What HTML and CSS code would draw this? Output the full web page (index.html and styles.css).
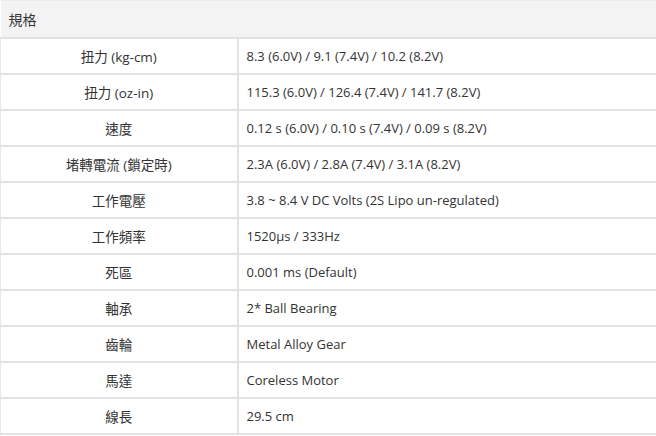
FILE: index.html
```html
<!DOCTYPE html>
<html lang="zh-Hant">
<head>
<meta charset="utf-8">
<link rel="stylesheet" href="styles.css">
</head>
<body>
<table class="spec">
  <colgroup>
    <col class="col-label">
    <col class="col-value">
  </colgroup>
  <thead>
    <tr><th colspan="2" class="spec-title">規格</th></tr>
  </thead>
  <tbody>
    <tr><td class="label">扭力 (kg-cm)</td><td class="value">8.3 (6.0V) / 9.1 (7.4V) / 10.2 (8.2V)</td></tr>
    <tr><td class="label">扭力 (oz-in)</td><td class="value">115.3 (6.0V) / 126.4 (7.4V) / 141.7 (8.2V)</td></tr>
    <tr><td class="label">速度</td><td class="value">0.12 s (6.0V) / 0.10 s (7.4V) / 0.09 s (8.2V)</td></tr>
    <tr><td class="label">堵轉電流 (鎖定時)</td><td class="value">2.3A (6.0V) / 2.8A (7.4V) / 3.1A (8.2V)</td></tr>
    <tr><td class="label">工作電壓</td><td class="value">3.8 ~ 8.4 V DC Volts (2S Lipo un-regulated)</td></tr>
    <tr><td class="label">工作頻率</td><td class="value">1520μs / 333Hz</td></tr>
    <tr><td class="label">死區</td><td class="value">0.001 ms (Default)</td></tr>
    <tr><td class="label">軸承</td><td class="value">2* Ball Bearing</td></tr>
    <tr><td class="label">齒輪</td><td class="value">Metal Alloy Gear</td></tr>
    <tr><td class="label">馬達</td><td class="value">Coreless Motor</td></tr>
    <tr><td class="label">線長</td><td class="value">29.5 cm</td></tr>
  </tbody>
</table>
</body>
</html>
```

FILE: styles.css
```css
html, body {
  margin: 0;
  padding: 0;
  background: #ffffff;
}

body {
  font-family: "Open Sans", "Noto Sans CJK TC", sans-serif;
  font-size: 13px;
  color: #333333;
}

.spec {
  width: 660px;
  border-collapse: collapse;
  table-layout: fixed;
}

.col-label {
  width: 237px;
}

.spec-title {
  text-align: left;
  font-weight: normal;
  font-size: 14px;
  background: #f3f3f3;
  height: 37px;
  padding: 0 8px;
  border-top: 1px solid #ebebeb;
  border-bottom: 2px solid #e2e2e2;
  box-sizing: border-box;
}

.spec td {
  height: 33px;
  padding: 1px 8px 0;
  border: 2px solid #e2e2e2;
  border-top: none;
  box-sizing: content-box;
}

.spec td.label {
  font-size: 13.5px;
  text-align: center;
  border-left: 1px solid #e8e8e8;
}

.spec td.value {
  text-align: left;
}
```
